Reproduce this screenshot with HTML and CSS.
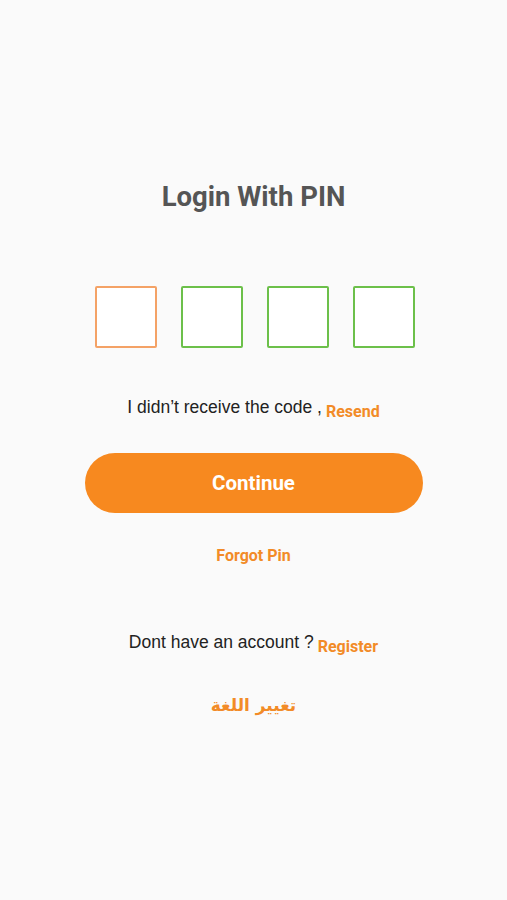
FILE: index.html
```html
<!DOCTYPE html>
<html lang="en">
<head>
  <meta charset="UTF-8">
  <meta name="viewport" content="width=device-width, initial-scale=1.0">
  <title>Login With PIN</title>
  <link rel="stylesheet" href="styles.css">
</head>
<body>
  <div class="screen">
    <h1 class="title">Login With PIN</h1>

    <!-- PIN boxes -->
    <div class="pin-row">
      <input class="pin-box active" type="text" maxlength="1">
      <input class="pin-box" type="text" maxlength="1">
      <input class="pin-box" type="text" maxlength="1">
      <input class="pin-box" type="text" maxlength="1">
    </div>

    <div class="line-row resend-row">
      <span class="line-text">I didn’t receive the code ,</span>
      <a class="link small-link" href="#">Resend</a>
    </div>

    <button class="continue-button">Continue</button>

    <a class="link forgot-link" href="#">Forgot Pin</a>

    <div class="line-row register-row">
      <span class="line-text">Dont have an account ?</span>
      <a class="link small-link" href="#">Register</a>
    </div>

    <a class="link lang-link" href="#" dir="rtl" lang="ar">تغيير اللغة</a>
  </div>
</body>
</html>
```

FILE: styles.css
```css
body {
  margin: 0;
  background: #fafafa;
  font-family: 'Liberation Sans', Arial, sans-serif;
  color: #222;
}

.screen {
  display: flex;
  flex-direction: column;
  align-items: center;
  padding-top: 182px;
}

.title {
  margin: 0;
  font-family: Roboto, sans-serif;
  font-size: 27.5px;
  line-height: 30px;
  font-weight: 700;
  color: #555;
}

/* PIN boxes */
.pin-row {
  display: flex;
  gap: 24px;
  margin-top: 74px;
  margin-left: 2px;
}

.pin-box {
  box-sizing: border-box;
  width: 62px;
  height: 62px;
  margin: 0;
  padding: 0;
  background: #fff;
  border: 2px solid #6cc04a;
  border-radius: 2px;
  outline: none;
}

.pin-box.active {
  border-color: #f4a266;
}

.line-row {
  display: flex;
  align-items: flex-start;
  gap: 4px;
}

.line-text {
  font-size: 17.5px;
  line-height: 20px;
  color: #222;
}

.link {
  font-family: Roboto, sans-serif;
  font-weight: 700;
  color: #f28b27;
  text-decoration: none;
}

.small-link {
  font-size: 16px;
  line-height: 20px;
  padding-top: 5px;
}

.resend-row {
  margin-top: 49px;
}

.continue-button {
  width: 338px;
  height: 60px;
  margin-top: 31px;
  border: none;
  border-radius: 30px;
  background: #f7891f;
  color: #fff;
  font-family: Roboto, sans-serif;
  font-size: 20.5px;
  font-weight: 700;
  cursor: pointer;
}

.forgot-link {
  margin-top: 33px;
  font-size: 16px;
  line-height: 20px;
}

.register-row {
  margin-top: 66px;
}

.lang-link {
  margin-top: 36px;
  font-family: 'DejaVu Sans', sans-serif;
  font-size: 17px;
  line-height: 24px;
}
```
